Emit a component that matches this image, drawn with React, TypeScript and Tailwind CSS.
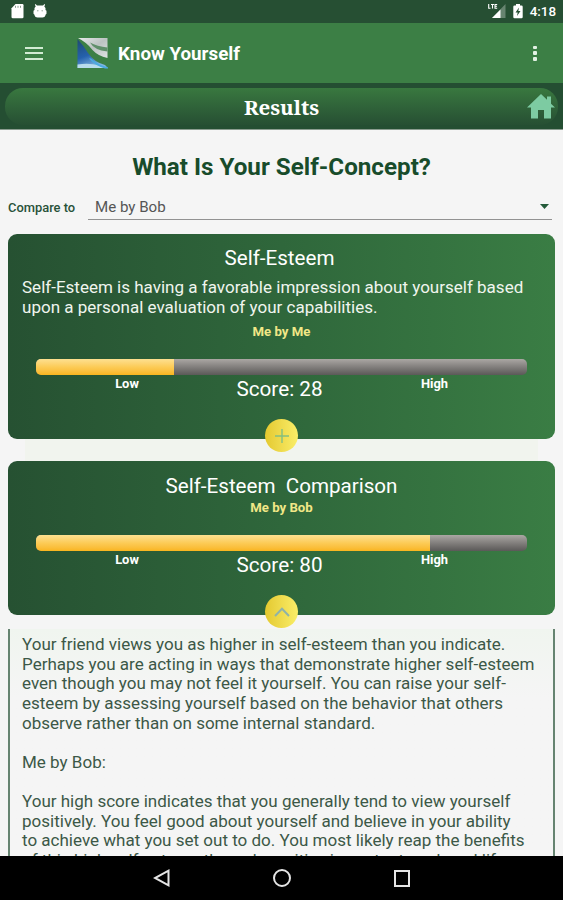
import React from "react";

type CardProps = {
  title: string;
  description?: string[];
  who: string;
  score: number;
  barWidth: string;
  className: string;
  children: React.ReactNode;
};

function ScoreCard({ title, description, who, score, barWidth, className, children }: CardProps) {
  return (
    <section
      className={`relative mx-2 shrink-0 rounded-[9px] bg-linear-to-r from-[#265132] via-[#2f673b] to-[#3a7d44] text-white ${className}`}
    >
      <h2 className={`h-6 whitespace-pre text-center text-[20.6px] leading-6 ${description ? "pr-[4px]" : ""}`}>{title}</h2>
      {description && (
        <div className="mt-[8px] h-10 pl-[14px] text-[17.02px] leading-[19.7px] text-[#f0f5ee]">
          {description.map((line) => (
            <p key={line} className="whitespace-nowrap">{line}</p>
          ))}
        </div>
      )}
      <p className={`text-center text-[13.2px] font-bold leading-4 text-[#f1e787] ${description ? "mt-[6px]" : "mt-[2px]"}`}>{who}</p>
      <div className="mx-7 mt-[19px] flex h-[16px] overflow-hidden rounded-[5px] bg-linear-to-b from-[#aba7a4] via-[#827f7d] to-[#5b5958]">
        <div className={`h-full bg-linear-to-b from-[#fde08f] via-[#fccb56] to-[#f9b51c] ${barWidth}`} />
      </div>
      <div className="mx-7 grid grid-cols-[182px_1fr_186px] text-center">
        <span className="text-[12.9px] font-bold leading-[18px]">Low</span>
        <span className="whitespace-nowrap text-[20.7px] leading-7">Score: {score}</span>
        <span className="pl-[1px] text-[12.9px] font-bold leading-[18px]">High</span>
      </div>
      <button className="absolute -bottom-[13px] left-[257px] flex size-[33px] items-center justify-center rounded-full bg-linear-to-r from-[#e4c92e] to-[#faee67]">
        {children}
      </button>
    </section>
  );
}

const report = [
  "Your friend views you as higher in self-esteem than you indicate.",
  "Perhaps you are acting in ways that demonstrate higher self-esteem",
  "even though you may not feel it yourself. You can raise your self-",
  "esteem by assessing yourself based on the behavior that others",
  "observe rather than on some internal standard.",
  "",
  "Me by Bob:",
  "",
  "Your high score indicates that you generally tend to view yourself",
  "positively. You feel good about yourself and believe in your ability",
  "to achieve what you set out to do. You most likely reap the benefits",
  "of this high self-esteem through positive important work and life",
];

export default function App() {
  return (
    <div className="flex h-[900px] w-[563px] flex-col overflow-hidden bg-[#f5f5f5] font-[Roboto,sans-serif]">
      <header className="flex h-[23px] shrink-0 items-center bg-[#264f33] pl-[11px] pr-[7px] text-white">
        <svg width="13" height="15" viewBox="0 0 13 15" fill="currentColor">
          <path d="M4.5 0H11.5Q12.5 0 12.5 1.2V13Q12.5 14.3 11.2 14.3H1.8Q.5 14.3.5 13V4.3Z" />
          <path d="M4.5 1.8v2M7 1.8v2M9.5 1.8v2" stroke="#8a9c90" strokeWidth="1" />
        </svg>
        <svg className="ml-[9px]" width="14" height="15" viewBox="0 0 14 15" fill="currentColor">
          <path d="M2.5 0 4 1.6h6L11.5 0l.6.8-.8 1.6L12.5 4v2l1 .8v3l-1 .9v.5q-.6 2.3-3 2.3h-5q-2.4 0-3-2.3v-.5l-1-.9v-3l1-.8V4l1.2-1.6L1.900.8Z" />
          <circle cx="4.8" cy="6.7" r=".8" fill="#9fb0a4" /><circle cx="9.2" cy="6.7" r=".8" fill="#9fb0a4" />
        </svg>
        <div className="ml-auto flex items-center">
          <svg width="18" height="15" viewBox="0 0 18 15" fill="currentColor">
            <path d="M17.5 0V14H4Z" opacity=".3" />
            <path d="M12.5 5.5V14H4Z" />
            <path d="M.7 0v4.2h1.8M3 .5h3M4.5.5v4M9.2.5H7v3.7h2.2M7 2.3h2" stroke="currentColor" fill="none" strokeWidth="1.1" />
          </svg>
          <svg className="ml-[7px] mr-[7px]" width="10" height="15" viewBox="0 0 10 15">
            <path fill="currentColor" d="M3 0h4v1.5h1.5Q9.7 1.5 9.7 2.7V13Q9.7 14.3 8.5 14.3h-7Q.3 14.3.3 13V2.7Q.3 1.5 1.5 1.5H3Z" />
            <path d="M6 3.5 2.5 8.5H4.7L4 12 7.5 7H5.3Z" fill="#264f33" />
          </svg>
          <span className="pt-[1px] text-[13.4px] font-medium leading-5">4:18</span>
        </div>
      </header>

      <div className="flex h-[60px] shrink-0 items-center bg-[#3c7f45] pl-[25px] pr-[26px] text-white">
        <div className="flex h-[13px] w-[18px] flex-col justify-between text-[#d2ebd3]">
          <span className="h-[2px] bg-current" /><span className="h-[2px] bg-current" /><span className="h-[2px] bg-current" />
        </div>
        <svg className="ml-[34px] mt-[1px]" width="31" height="31" viewBox="0 0 31 31">
          <defs>
            <linearGradient id="silver" x1="0" y1="0" x2="1" y2="1"><stop stopColor="#e6e9e9" /><stop offset=".5" stopColor="#bcc3c2" /><stop offset="1" stopColor="#dfe3e4" /></linearGradient>
            <linearGradient id="blue" x1="0" y1="0" x2=".4" y2="1"><stop stopColor="#1f4a6e" /><stop offset=".6" stopColor="#2561ad" /><stop offset="1" stopColor="#7fb4df" /></linearGradient>
          </defs>
          <path d="M1 0H30.500V20Q21 18 15.500 12Q10 4.500 1 0Z" fill="url(#silver)" />
          <path d="M13 4.500Q17 12 30.500 13.500V9.500Q20 8.500 13 4.500Z" fill="#5f8f6a" />
          <path d="M.5 1Q7 8 11 15Q17 24 28 27L31 30H.5Z" fill="url(#blue)" />
          <path d="M.5 26.500Q12 24.500 22 27.500L27 30H.5Z" fill="#b8dcec" />
          <path d="M14 20.500Q20 26.500 31 29.500V30.500H28Q18 27.500 12 20.500Z" fill="#4aabe1" />
        </svg>
        <h1 className="ml-[10px] mt-[2px] whitespace-nowrap text-[18.8px] font-bold leading-6">Know Yourself</h1>
        <div className="ml-auto flex h-[15px] w-[4px] flex-col justify-between">
          <span className="size-[3.5px] rounded-[1px] bg-[#e3f1e4]" /><span className="size-[3.5px] rounded-[1px] bg-[#e3f1e4]" /><span className="size-[3.5px] rounded-[1px] bg-[#e3f1e4]" />
        </div>
      </div>

      <div className="h-[47px] shrink-0 border-b border-[#8b9c90] bg-[#244e32] px-[5px] pt-[5px]">
        <div className="relative flex h-[37px] items-center justify-center rounded-[18px] bg-linear-to-b from-[#39783f] to-[#264f33]">
          <span className="pt-[1px] font-['Noto_Serif','DejaVu_Serif',serif] text-[20.5px] font-bold leading-6 text-white">Results</span>
          <svg className="absolute right-[3px] top-[6px]" width="28" height="25" viewBox="0 0 28 25" fill="#7dcba2">
            <path d="M14 0 20 5.800V2.500h4V9.700L28 13.500H24V24.500H17V16H11V24.500H4V13.500H0Z" />
          </svg>
        </div>
      </div>

      <main className="flex min-h-0 flex-1 flex-col">
        <h2 className="mt-[22px] h-[30px] shrink-0 text-center text-[24.2px] font-bold leading-[30px] text-[#184c2b]">What Is Your Self-Concept?</h2>
        <div className="ml-2 mr-[11px] mt-[12px] flex h-[26px] shrink-0 items-center">
          <span className="w-20 whitespace-nowrap pt-[2px] text-[12.9px] font-medium text-[#285239]">Compare to</span>
          <div className="flex h-[26px] flex-1 items-center justify-between border-b border-[#929292] pl-[7px] pr-[3px]">
            <span className="pt-[1px] text-[15.1px] leading-5 text-[#555]">Me by Bob</span>
            <svg width="9" height="5" viewBox="0 0 9 5"><path d="M0 0H9L4.500 5Z" fill="#245b3a" /></svg>
          </div>
        </div>

        <ScoreCard
          title="Self-Esteem"
          description={["Self-Esteem is having a favorable impression about yourself based", "upon a personal evaluation of your capabilities."]}
          who="Me by Me"
          score={28}
          barWidth="w-[138px]"
          className="mt-[14px] h-[205px] pt-[12px]"
        >
          <svg width="14" height="14" viewBox="0 0 14 14" stroke="#83bf80" strokeWidth="1.4"><path d="M7 0V14M0 7H14" /></svg>
        </ScoreCard>
        <div className="mx-[25px] h-[22px] shrink-0 bg-[#f1f4ee]" />
        <ScoreCard
          title="Self-Esteem  Comparison"
          who="Me by Bob"
          score={80}
          barWidth="w-[394px]"
          className="h-[154px] pt-[13px]"
        >
          <svg width="16" height="10" viewBox="0 0 16 10" fill="none" stroke="#8fb3a8" strokeWidth="2"><path d="M1 9 8 1.8 15 9" /></svg>
        </ScoreCard>

        <article className="mx-2 mt-[14px] min-h-0 flex-1 overflow-hidden border-x-2 border-[#668471] bg-linear-to-b from-[#f0f5ef] to-[#f5f5f5] to-30% pl-[12px] pt-[6px] text-[17.02px] leading-[19.65px] text-[#3c5847]">
          {report.map((line, i) => (
            <p key={i} className="h-[19.65px] whitespace-nowrap">{line}</p>
          ))}
        </article>
      </main>

      <nav className="flex h-[44px] shrink-0 items-center justify-center gap-[103px] bg-black">
        <svg width="17" height="18" viewBox="0 0 17 18" fill="none" stroke="#e5e5e5" strokeWidth="2"><path d="M15.5 1.7V16.3L2 9Z" /></svg>
        <svg width="18" height="18" viewBox="0 0 18 18" fill="none" stroke="#e5e5e5" strokeWidth="2"><circle cx="9" cy="9" r="8" /></svg>
        <svg width="16" height="17" viewBox="0 0 16 17" fill="none" stroke="#e5e5e5" strokeWidth="2"><rect x="1" y="1" width="14" height="15" /></svg>
      </nav>
    </div>
  );
}
